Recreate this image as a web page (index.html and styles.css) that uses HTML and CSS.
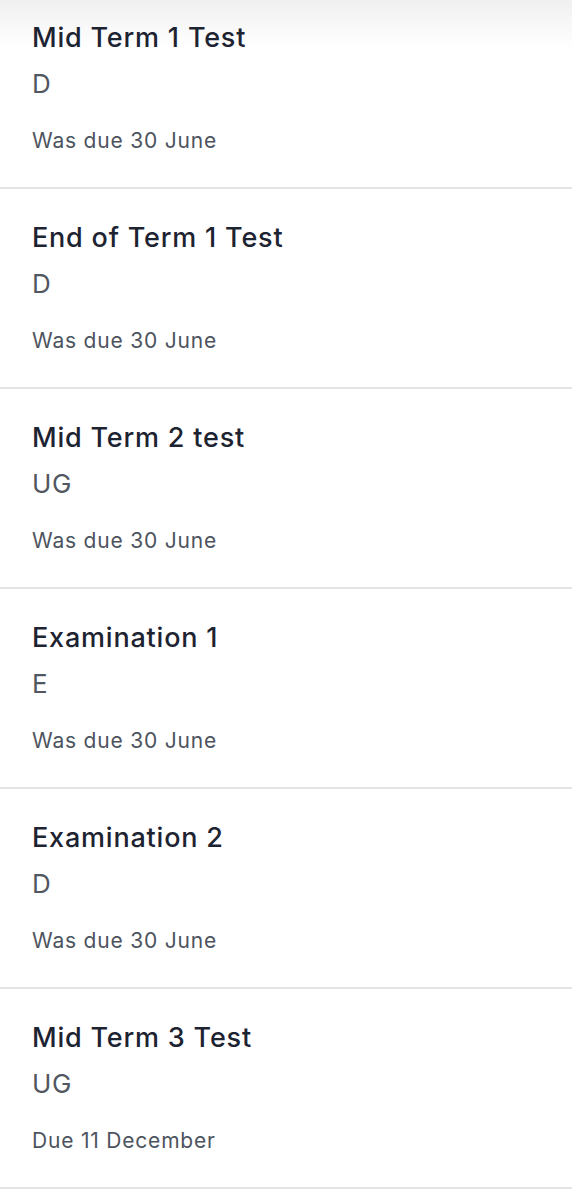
FILE: index.html
```html
<!DOCTYPE html>
<html lang="en">
<head>
  <meta charset="UTF-8">
  <meta name="viewport" content="width=device-width, initial-scale=1.0">
  <title>Assignments</title>
  <link rel="stylesheet" href="styles.css">
</head>
<body>
  <ul class="work-list">
    <li class="work-item">
      <div class="work-title">Mid Term 1 Test</div>
      <div class="work-grade">D</div>
      <div class="work-due">Was due 30 June</div>
    </li>
    <li class="work-item">
      <div class="work-title">End of Term 1 Test</div>
      <div class="work-grade">D</div>
      <div class="work-due">Was due 30 June</div>
    </li>
    <li class="work-item">
      <div class="work-title">Mid Term 2 test</div>
      <div class="work-grade">UG</div>
      <div class="work-due">Was due 30 June</div>
    </li>
    <li class="work-item">
      <div class="work-title">Examination 1</div>
      <div class="work-grade">E</div>
      <div class="work-due">Was due 30 June</div>
    </li>
    <li class="work-item">
      <div class="work-title">Examination 2</div>
      <div class="work-grade">D</div>
      <div class="work-due">Was due 30 June</div>
    </li>
    <li class="work-item">
      <div class="work-title">Mid Term 3 Test</div>
      <div class="work-grade">UG</div>
      <div class="work-due">Due 11 December</div>
    </li>
  </ul>
</body>
</html>
```

FILE: styles.css
```css
/* General styles */
body {
  margin: 0;
  padding: 0;
  background: #fff linear-gradient(to bottom, #f0f0f0, #fff 48px) no-repeat;
  font-family: Inter, "Noto Sans", sans-serif;
  overflow: hidden;
}

.work-list {
  list-style: none;
  margin: -11px 0 0;
  padding: 0;
}

.work-item {
  height: 198px;
  padding: 0 32px;
  border-bottom: 2px solid #e3e3e5;
  display: flex;
  flex-direction: column;
}

.work-title {
  margin-top: 32px;
  font-size: 27px;
  line-height: 34px;
  font-weight: 500;
  letter-spacing: 0.8px;
  color: #1d2331;
}

.work-grade {
  margin-top: 13px;
  font-size: 26px;
  line-height: 32px;
  letter-spacing: 0.6px;
  color: #51565f;
}

.work-due {
  margin-top: 27px;
  font-size: 21px;
  line-height: 28px;
  letter-spacing: 0.8px;
  color: #4d535e;
}
```
